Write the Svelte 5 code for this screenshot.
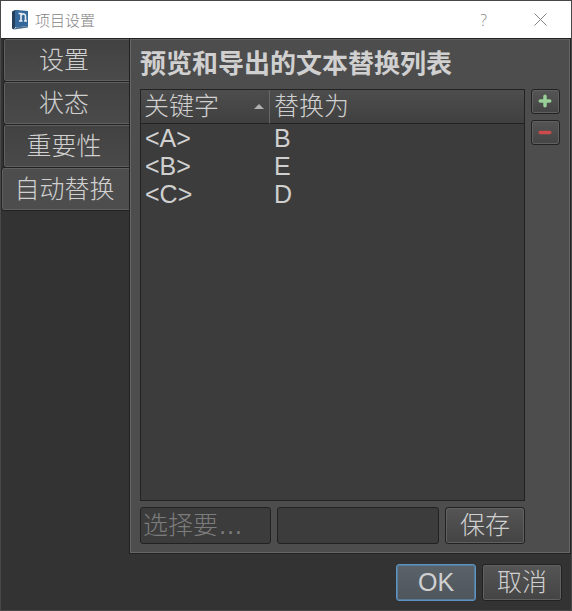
<!-- Project settings dialog, opened on the auto-replace tab. -->
<script lang="ts">
    type Entry = { keyword: string; replacement: string };

    const tabs = ["设置", "状态", "重要性", "自动替换"];

    let activeTab = $state("自动替换");
    let entries = $state<Entry[]>([
        { keyword: "<A>", replacement: "B" },
        { keyword: "<B>", replacement: "E" },
        { keyword: "<C>", replacement: "D" },
    ]);
    let selected = $state(-1);
    let keyword = $state("");
    let replacement = $state("");

    function selectEntry(index: number) {
        selected = index;
        keyword = entries[index].keyword;
        replacement = entries[index].replacement;
    }

    function addEntry() {
        entries.push({ keyword: `<${entries.length + 1}>`, replacement: "" });
        selectEntry(entries.length - 1);
    }

    function removeEntry() {
        if (selected < 0) return;
        entries.splice(selected, 1);
        selected = -1;
        keyword = "";
        replacement = "";
    }

    function saveEntry(event: SubmitEvent) {
        event.preventDefault();
        if (selected < 0) return;
        entries[selected] = { keyword, replacement };
    }
</script>

<div class="dialog" role="dialog" aria-labelledby="dialog-title">
    <header class="title-bar">
        <svg class="app-icon" width="18" height="22" viewBox="0 0 18 22" aria-hidden="true">
            <path d="M1 2.500 4 1v17.500L3 20.500 1 19.500z" fill="#24405c" />
            <path d="M4 1h2l11 1v15L5 18.500 4 18z" fill="#35689a" />
            <path d="m3 20.500 14-2V17L5 18.500z" fill="#4a6d8c" />
            <path
                d="M7.500 4.500h2.500v7.500M8 12h3.500M10 6.500q1.500-2 3-1.500 1.500.3 1.500 2V12M13 12h3"
                fill="none"
                stroke="#e7eef4"
                stroke-width="1.600"
            />
        </svg>
        <span class="title" id="dialog-title">项目设置</span>
        <button type="button" class="window-btn help" aria-label="帮助">?</button>
        <button type="button" class="window-btn" aria-label="关闭">
            <svg width="13" height="13" viewBox="0 0 13 13" fill="none" stroke="#858585">
                <path d="m.5.5 12 12M12.500.5l-12 12" />
            </svg>
        </button>
    </header>

    <div class="body">
        <div class="tabs" role="tablist" aria-orientation="vertical">
            {#each tabs as tab}
                <button
                    type="button"
                    role="tab"
                    class="tab"
                    class:active={tab === activeTab}
                    aria-selected={tab === activeTab}
                    onclick={() => (activeTab = tab)}>{tab}</button
                >
            {/each}
        </div>

        <main class="pane">
            <h1>预览和导出的文本替换列表</h1>
            <div class="columns">
                <div class="list">
                    <div class="table-box">
                        <table>
                            <thead>
                                <tr>
                                    <th class="key-col" aria-sort="ascending">
                                        <span class="sortable">
                                            关键字
                                            <svg width="10" height="5" viewBox="0 0 10 5" aria-hidden="true">
                                                <path d="M0 5 5 0l5 5z" fill="#b0b0b0" />
                                            </svg>
                                        </span>
                                    </th>
                                    <th>替换为</th>
                                </tr>
                            </thead>
                            <tbody>
                                {#each entries as entry, index}
                                    <tr
                                        class:selected={index === selected}
                                        onclick={() => selectEntry(index)}
                                    >
                                        <td>{entry.keyword}</td>
                                        <td>{entry.replacement}</td>
                                    </tr>
                                {/each}
                            </tbody>
                        </table>
                    </div>
                    <form class="edit-row" onsubmit={saveEntry}>
                        <input
                            type="text"
                            class="key-input"
                            aria-label="关键字"
                            placeholder="选择要…"
                            disabled={selected < 0}
                            bind:value={keyword}
                        />
                        <input
                            type="text"
                            class="value-input"
                            aria-label="替换为"
                            disabled={selected < 0}
                            bind:value={replacement}
                        />
                        <button type="submit" class="btn">保存</button>
                    </form>
                </div>
                <div class="tools">
                    <button type="button" class="btn tool" aria-label="添加" onclick={addEntry}>
                        <svg width="15" height="15" viewBox="0 0 15 15" stroke="#98d098" stroke-width="3.500" stroke-linecap="round">
                            <path d="M7 2.250v9.500M2.250 7h9.500" />
                        </svg>
                    </button>
                    <button type="button" class="btn tool" aria-label="删除" onclick={removeEntry}>
                        <svg width="15" height="15" viewBox="0 0 15 15" stroke="#cd4b4b" stroke-width="3.500" stroke-linecap="round">
                            <path d="M2.250 7.500h9.500" />
                        </svg>
                    </button>
                </div>
            </div>
        </main>
    </div>

    <footer class="actions">
        <button type="button" class="btn primary">OK</button>
        <button type="button" class="btn">取消</button>
    </footer>
</div>

<style>
    :global(body) {
        margin: 0;
        background: #333;
    }

    .dialog {
        box-sizing: border-box;
        min-height: 100vh;
        display: flex;
        flex-direction: column;
        border: 1px solid #484848;
        background: #333;
        color: #d0d0d0;
        font-family: "Liberation Sans", "Noto Sans CJK SC", sans-serif;
        font-size: 25px;
        font-weight: 300;
    }

    button,
    input {
        box-sizing: border-box;
        margin: 0;
        font: inherit;
        color: inherit;
    }

    .title-bar {
        display: flex;
        align-items: center;
        height: 37px;
        padding: 0 2px 0 10px;
        background: #fff;
        color: #858585;
    }

    .title {
        flex: 1;
        margin-left: 6px;
        font-size: 15px;
    }

    .window-btn {
        display: flex;
        align-items: center;
        justify-content: center;
        width: 57px;
        height: 37px;
        padding: 0;
        border: none;
        background: none;
    }

    .help {
        font-family: "Open Sans", sans-serif;
        font-size: 16px;
    }

    .body {
        flex: 1;
        display: flex;
        padding-right: 1px;
        border-top: 1px solid #222;
    }

    .tabs {
        flex: none;
        width: 129px;
        display: flex;
        flex-direction: column;
        align-items: flex-end;
        gap: 1px;
    }

    .tab {
        width: 126px;
        height: 42px;
        padding: 0 6px 0 0;
        border: 1px solid #606060;
        border-right-color: #292929;
        border-radius: 2px 0 0 2px;
        outline: 1px solid #222;
        background: linear-gradient(#424242, #4a4a4a);
        line-height: 40px;
    }

    .tab.active {
        width: 128px;
        padding-right: 4px;
        border-right: none;
        background: #4d4d4d;
    }

    .pane {
        flex: 1;
        min-width: 0;
        display: flex;
        flex-direction: column;
        padding: 0 9px 8px;
        border: 1px solid #666;
        border-top-color: #606060;
        outline: 1px solid #222;
        background: #4d4d4d;
    }

    h1 {
        margin: 0;
        font-size: 26px;
        font-weight: 700;
        line-height: 49px;
    }

    .columns {
        flex: 1;
        display: flex;
        gap: 6px;
    }

    .list {
        flex: 1;
        min-width: 0;
        display: flex;
        flex-direction: column;
        gap: 6px;
    }

    .table-box {
        flex: 1;
        border: 1px solid #222;
        background: #3c3c3c;
    }

    table {
        width: 100%;
        border-collapse: separate;
        border-spacing: 0;
        table-layout: fixed;
    }

    th {
        height: 33px;
        padding: 0 4px;
        border-bottom: 1px solid #222;
        background: linear-gradient(#4d4d4d, #404040);
        font-weight: inherit;
        line-height: 33px;
        text-align: left;
    }

    .key-col {
        width: 120px;
        padding: 0 5px 0 3px;
        border-right: 1px solid #666;
    }

    .sortable {
        display: flex;
        align-items: center;
        justify-content: space-between;
    }

    td {
        height: 28px;
        padding: 0 4px;
        line-height: 28px;
    }

    tr.selected {
        background: #3d5a78;
    }

    .edit-row {
        display: flex;
        gap: 6px;
    }

    input {
        min-width: 0;
        height: 37px;
        padding: 0 2px;
        border: 1px solid #222;
        border-radius: 3px;
        background: #3c3c3c;
    }

    input::placeholder {
        color: #7c7c7c;
        opacity: 1;
    }

    .key-input {
        flex: 130 1 0;
    }

    .value-input {
        flex: 163 1 0;
    }

    .tools {
        display: flex;
        flex-direction: column;
        gap: 6px;
    }

    .btn {
        flex: none;
        width: 80px;
        height: 37px;
        padding: 0;
        border: 1px solid #222;
        border-radius: 3px;
        background: linear-gradient(#555, #444);
        box-shadow: inset 0 0 0 1px #606060;
        line-height: 35px;
    }

    .tool {
        display: flex;
        align-items: center;
        justify-content: center;
        width: 29px;
        height: 25px;
    }

    .actions {
        display: flex;
        justify-content: flex-end;
        gap: 6px;
        padding: 11px 9px 9px;
    }

    .primary {
        border-color: #5b93c6;
        background: linear-gradient(#5b636a, #4e565c);
        box-shadow: inset 0 0 0 1px #5b7a96;
    }
</style>
